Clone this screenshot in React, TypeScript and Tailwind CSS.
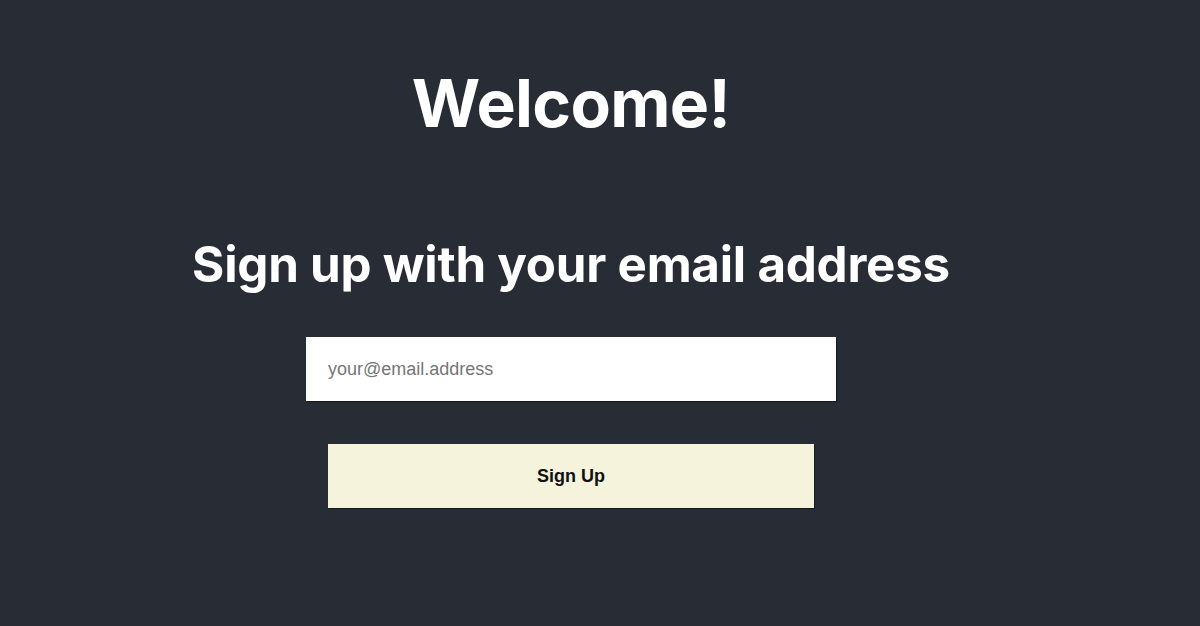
import { useState } from 'react';

export default function App() {
  const [email, setEmail] = useState('');

  return (
    <div className="min-h-[626px] w-full bg-[#282c34] pr-[58px] text-white">
      <div className="flex flex-col items-center pt-[70px]">
        <h1 className="font-['Inter',sans-serif] text-[66px] font-bold leading-none tracking-[-0.01em]">
          Welcome!
        </h1>

        <h2 className="mt-[104px] font-['Inter',sans-serif] text-[49.3px] font-bold leading-none tracking-[-0.005em]">
          Sign up with your email address
        </h2>

        <form
          className="mt-[48px] flex flex-col items-center"
          onSubmit={(e) => e.preventDefault()}
        >
          <input
            type="email"
            value={email}
            onChange={(e) => setEmail(e.target.value)}
            placeholder="your@email.address"
            className="h-[64px] w-[530px] bg-white px-[22px] font-['Liberation_Sans',Arial,sans-serif] text-[18px] text-gray-900 shadow-[1px_1px_1px_rgba(0,0,0,0.35)] outline-none placeholder:text-[#767676]"
          />
          <button
            type="submit"
            className="mt-[43px] h-[64px] w-[486px] bg-[#f5f3dc] font-['Liberation_Sans',Arial,sans-serif] text-[18px] font-bold text-[#111] shadow-[1px_1px_1px_rgba(0,0,0,0.35)]"
          >
            Sign Up
          </button>
        </form>
      </div>
    </div>
  );
}
